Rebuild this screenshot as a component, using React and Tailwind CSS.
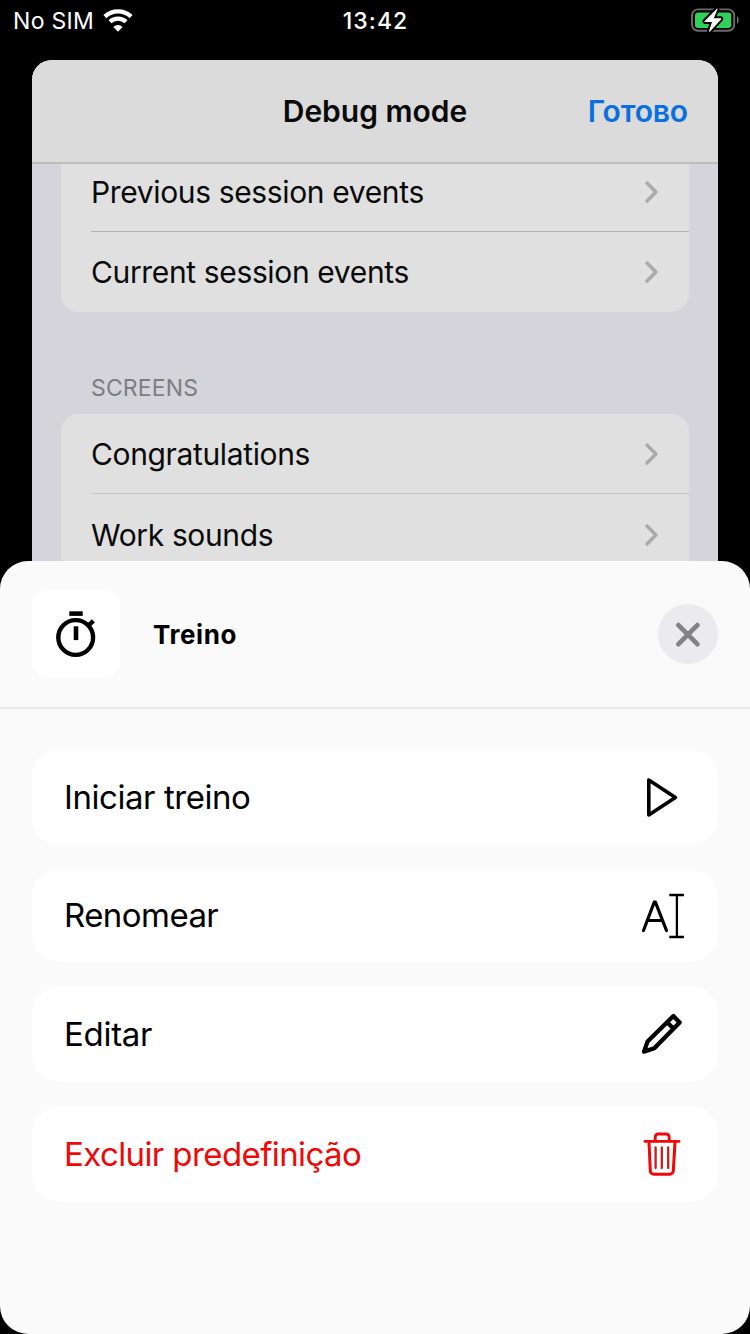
const FONT = "font-['Inter','Liberation_Sans',sans-serif]";

function Wifi() {
  return (
    <svg className="ml-[9px] h-[24px] w-[30px]" viewBox="0 0 30 24" fill="none">
      <path d="M1.900 7.600a19 19 0 0 1 26.200 0" stroke="#fff" strokeWidth="4.400" />
      <path d="M7 12.800a11.800 11.800 0 0 1 16 0" stroke="#fff" strokeWidth="4.200" />
      <path d="M10.400 17.900a6.600 6.600 0 0 1 9.200 0L15 22.800z" fill="#fff" />
    </svg>
  );
}

function Battery() {
  return (
    <svg className="h-[26px] w-[50px]" viewBox="690 6.5 50 26" fill="none">
      <rect x="692" y="8.900" width="42.200" height="21.400" rx="6" stroke="#6b6b6b" strokeWidth="1.900" />
      <rect x="695" y="12" width="36.200" height="15.400" rx="3.200" fill="#30d158" />
      <path d="M737 15.800c2.300.9 2.300 6.700 0 7.600z" fill="#6b6b6b" />
      <path
        d="M716.600 8.400 704.600 20.400c-.4.6-.2 1 .4 1h7l-3 9.100c-.1.8.6 1 1 .4l11-12c.5-.7.2-1.100-.4-1.100h-6.800l3.700-9c.2-.8-.5-1-.9-.4z"
        fill="#fff"
        stroke="#000"
        strokeWidth="4"
        strokeLinejoin="round"
        style={{ paintOrder: "stroke" }}
      />
    </svg>
  );
}

function Chevron() {
  return (
    <svg className="h-[24px] w-[16px]" viewBox="0 0 16 24" fill="none" stroke="#a9a9ab" strokeWidth="3.400" strokeLinecap="round" strokeLinejoin="round">
      <path d="M4 3 12.900 12 4 21" />
    </svg>
  );
}

function ListRow({ label, className }) {
  return (
    <div className={`flex items-center justify-between pr-[30px] ${className}`}>
      <span className="text-[30px] leading-[40px] tracking-[-0.36px] text-[#0a0a0a]">{label}</span>
      <Chevron />
    </div>
  );
}

function Stopwatch() {
  return (
    <svg className="h-[88px] w-[88px]" viewBox="0 0 88 88" fill="none" stroke="#000">
      <circle cx="43.700" cy="47.500" r="17.400" strokeWidth="4.400" />
      <path d="M37.300 23.600h13.400" strokeWidth="4.600" />
      <path d="M44 36.300v13.800" strokeWidth="4.600" />
      <path d="M56 35.800 61.400 30.800" strokeWidth="4.400" />
    </svg>
  );
}

function Play() {
  return (
    <svg className="h-[48px] w-[48px]" viewBox="0 0 48 48" fill="none" stroke="#000" strokeWidth="3.600" strokeLinejoin="round">
      <path d="M10.800 7.100v34.900L37.400 24.600z" />
    </svg>
  );
}

function TextCursor() {
  return (
    <svg className="h-[47px] w-[48px]" viewBox="0 0 48 47" fill="none" stroke="#000">
      <path d="M5.500 38.500 16.200 10.200h1.200L28.500 38.500M9.300 28.500h15.400" strokeWidth="3.200" strokeLinecap="round" strokeLinejoin="round" />
      <path d="M31.300 3h14.700M31.300 45h14.700M38.900 3v42" strokeWidth="2.300" />
    </svg>
  );
}

function Pencil() {
  return (
    <svg className="h-[48px] w-[48px]" viewBox="0 0 48 48" fill="none" stroke="#000" strokeWidth="4.300" strokeLinejoin="round">
      <path d="M6 41.600 9.600 31.500 35.400 6l6.200 6.500L16.300 38.200z" />
      <path d="M29.300 12.500 35.800 18.800" />
    </svg>
  );
}

function Trash() {
  return (
    <svg className="h-[48px] w-[48px]" viewBox="0 0 48 48" fill="none" stroke="#f00808" strokeLinecap="round" strokeLinejoin="round">
      <path d="M7 11.400h34" strokeWidth="2.900" />
      <path d="M17.200 11V7a3 3 0 0 1 3-3h8a3 3 0 0 1 3 3v4" strokeWidth="2.900" />
      <path d="M11 12l1.300 28.800a3.600 3.600 0 0 0 3.600 3.500h15.800a3.600 3.600 0 0 0 3.600-3.500L37 12" strokeWidth="3" />
      <path d="M17.600 17.400v20.600M23.800 17.400V38M30.200 17.400V38" strokeWidth="2.300" stroke="#c81e20" />
    </svg>
  );
}

function Action({ label, icon, className, labelClassName = "tracking-[-0.5px]" }) {
  return (
    <button type="button" className={`flex w-full items-center justify-between rounded-[28px] bg-white px-[32px] text-left ${className}`}>
      <span className={`text-[33px] leading-[40px] ${labelClassName}`}>{label}</span>
      {icon}
    </button>
  );
}

export default function App() {
  return (
    <div className={`flex h-[1334px] w-[750px] flex-col overflow-hidden bg-black ${FONT}`}>
      <header className="grid h-[60px] shrink-0 grid-cols-3 items-start text-white">
        <div className="flex h-[42px] items-center pl-[13px]">
          <span className="text-[23px] leading-[28px] tracking-[0.3px]">No SIM</span>
          <Wifi />
        </div>
        <div className="flex h-[42px] items-center justify-center pl-[1px] text-[23px] font-medium tracking-[1.1px]">13:42</div>
        <div className="flex h-[39px] items-center justify-end pr-[10px]">
          <Battery />
        </div>
      </header>

      <section className="mx-[32px] h-[501px] shrink-0 overflow-hidden rounded-t-[20px] bg-[#d5d4da]">
        <div className="grid h-[104px] grid-cols-[1fr_auto_1fr] items-center border-b-2 border-[#bdbdc0] bg-[#dbdbdc] px-[30px]">
          <span />
          <h1 className="text-[30px] font-semibold leading-[40px] text-[#0a0a0a]">Debug mode</h1>
          <button type="button" className="text-right text-[30px] font-semibold leading-[40px] tracking-[-0.15px] text-[#0a6fdf]">Готово</button>
        </div>
        <div className="mx-[29px] h-[148px] rounded-b-[18px] bg-[#e0e0e0] pl-[30px]">
          <ListRow label="Previous session events" className="h-[68px] border-b border-[#b3b3b5] pb-[11px]" />
          <ListRow label="Current session events" className="h-[80px]" />
        </div>
        <h2 className="h-[102px] pl-[59px] pt-[61px] text-[23px] leading-[30px] tracking-[0.15px] text-[#7d7d82]">SCREENS</h2>
        <div className="mx-[29px] h-[147px] rounded-t-[18px] bg-[#e0e0e0] pl-[30px]">
          <ListRow label="Congratulations" className="h-[80px] border-b border-[#c4c4c6]" />
          <ListRow label="Work sounds" className="h-[81px]" />
        </div>
      </section>

      <main className="flex flex-1 flex-col rounded-[28px] bg-[#fafafa] text-black">
        <div className="flex h-[148px] items-center border-b-2 border-[#e9e9ea] px-[32px]">
          <div className="rounded-[16px] bg-white">
            <Stopwatch />
          </div>
          <h2 className="ml-[33px] flex-1 pt-[2px] text-[26px] font-bold leading-[36px] tracking-[0.6px]">Treino</h2>
          <button type="button" aria-label="Fechar" className="flex size-[60px] items-center justify-center rounded-full bg-[#ebebed]">
            <svg className="size-[28px]" viewBox="0 0 28 28" stroke="#838386" strokeWidth="4.800" strokeLinecap="round">
              <path d="M4.400 5.100 23.400 24.100M23.400 5.100 4.400 24.100" />
            </svg>
          </button>
        </div>
        <div className="flex flex-col gap-6 px-[32px] pt-[40px]">
          <Action label="Iniciar treino" icon={<Play />} className="h-[96px]" labelClassName="tracking-[-0.44px]" />
          <Action label="Renomear" icon={<TextCursor />} className="h-[93px]" labelClassName="pb-[2px] tracking-[-0.56px]" />
          <Action label="Editar" icon={<Pencil />} className="h-[96px]" labelClassName="tracking-[-0.3px]" />
          <Action label="Excluir predefinição" icon={<Trash />} className="h-[96px] text-[#f00808]" labelClassName="tracking-[-0.6px]" />
        </div>
      </main>
    </div>
  );
}
